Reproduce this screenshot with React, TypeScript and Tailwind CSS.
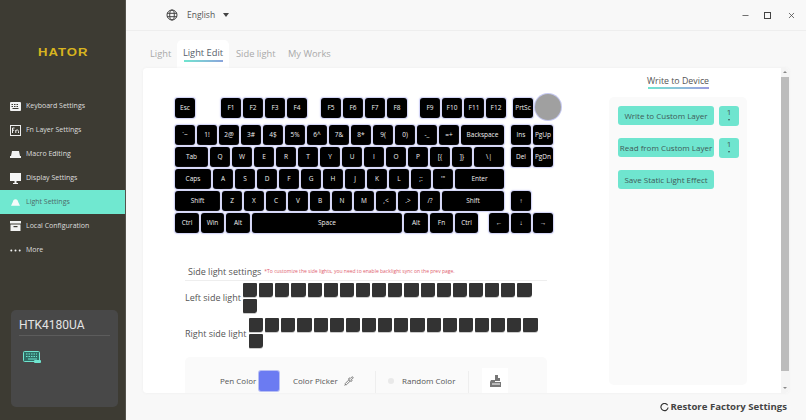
import React from "react";
import { Pipette, Minus, X } from "lucide-react";

type K = [string, number?];
const f = (s: string): K[] => s.split(" ").map((x) => [x]);
const rows: { keys: (K | number)[]; }[] = [
  { keys: [["`~"], ...f("1! 2@ 3# 4$ 5% 6^ 7& 8* 9( 0) -_ =+"), ["Backspace", 43], 3, ["Ins"], ["PgUp"]] },
  { keys: [["Tab", 33], ...f("Q W E R T Y U I O P [{ ]}"), ["\\|", 30], 3, ["Del"], ["PgDn"]] },
  { keys: [["Caps", 36], ...f("A S D F G H J K L ;: '\""), ["Enter", 49]] },
  { keys: [["Shift", 45], ...f("Z X C V B N M ,< .> /?"), ["Shift", 62], 3, ["↑"]] },
  { keys: [["Ctrl", 24], ["Win", 23], ["Alt", 24], ["Space", 150], ["Alt", 24], ["Fn", 23], ["Ctrl", 23], 7, ["←"], ["↓"], ["→"]] },
];

function Key({ label, w = 20 }: { label: string; w?: number }) {
  return (
    <div
      className="h-5 shrink-0 bg-black rounded-[3px] shadow-[0_0_0_1px_#d4d6f6,0_0_2px_1px_#e2e3fa] text-[#f0f0f0] flex items-center justify-center text-[6.5px] font-medium leading-none"
      style={{ width: w }}
    >
      {label}
    </div>
  );
}

function Row({ keys }: { keys: (K | number)[] }) {
  return (
    <div className="flex gap-[2px] h-5 items-center">
      {keys.map((k, i) =>
        typeof k === "number" ? (
          <div key={i} className="shrink-0" style={{ width: k }} />
        ) : (
          <Key key={i} label={k[0]} w={k[1]} />
        )
      )}
    </div>
  );
}

const navIcons: React.ReactNode[] = [
  <svg key="0" width="11" height="9" viewBox="0 0 11 9"><rect width="11" height="9" rx="1" fill="#f2f2f2" /><g fill="#3d3b34"><rect x="1.5" y="2" width="1.5" height="1" /><rect x="4" y="2" width="1.5" height="1" /><rect x="6.5" y="2" width="1.5" height="1" /><rect x="1.5" y="4" width="1.5" height="1" /><rect x="4" y="4" width="1.5" height="1" /><rect x="6.5" y="4" width="1.5" height="1" /><rect x="2.5" y="6" width="6" height="1" /></g></svg>,
  <svg key="1" width="11" height="11" viewBox="0 0 11 11"><rect x=".5" y=".5" width="10" height="10" fill="none" stroke="#eee" /><path d="M2.5 3h2M2.5 3v5M2.5 5.2h1.6M5.8 8V5M5.8 5.5c1.5-1 2.7-.6 2.7 1V8" fill="none" stroke="#eee" /></svg>,
  <svg key="2" width="11" height="7" viewBox="0 0 11 7"><path d="M2 0h7l1 5H1z" fill="#f2f2f2" /><rect y="5" width="11" height="2" fill="#f2f2f2" /></svg>,
  <svg key="3" width="11" height="11" viewBox="0 0 11 11"><rect width="11" height="8" fill="#f5f5f5" /><rect x="4.5" y="8" width="2" height="2" fill="#f5f5f5" /><rect x="3" y="10" width="5" height="1" fill="#f5f5f5" /></svg>,
  <svg key="4" width="9" height="7" viewBox="0 0 11 8"><path d="M5.5 0C3.5 0 2.5 1.5 2.200 3.500L0 8h11L8.800 3.500C8.500 1.500 7.500 0 5.500 0z" fill="#f5fbfa" /></svg>,
  <svg key="5" width="11" height="10" viewBox="0 0 11 10"><rect width="11" height="2.500" fill="#f2f2f2" /><rect x="0.500" y="3.500" width="10" height="6.500" fill="#f2f2f2" /><rect x="3.500" y="5" width="4" height="1.200" fill="#3d3b34" /></svg>,
  <svg key="6" width="11" height="3" viewBox="0 0 11 3"><circle cx="1.300" cy="1.500" r="1" fill="#f2f2f2" /><circle cx="5.500" cy="1.500" r="1" fill="#f2f2f2" /><circle cx="9.700" cy="1.500" r="1" fill="#f2f2f2" /></svg>,
];
const nav = ["Keyboard Settings", "Fn Layer Settings", "Macro Editing", "Display Settings", "Light Settings", "Local Configuration", "More"];

function Squares({ n }: { n: number }) {
  return (
    <>
      {Array.from({ length: n }).map((_, i) => (
        <div key={i} className="w-[14.15px] h-[14px] bg-[#333333] rounded-[1px] rounded-br-[3px] shadow-[0_1px_0_#cccccc]" />
      ))}
    </>
  );
}

function Btn({ children }: { children: React.ReactNode }) {
  return (
    <div className="w-[96px] h-[19px] bg-[#6fe5cf] rounded-[3px] flex items-center justify-center text-[8px] text-[#3f5a58] whitespace-nowrap">
      {children}
    </div>
  );
}
function Spin() {
  return (
    <div className="w-5 h-5 ml-[5px] bg-[#6fe5cf] rounded-[3px] flex flex-col items-center text-[#3f5a58] text-[8px] leading-none pt-[2px]">
      <span>1</span>
      <span className="mt-[3px] w-0 h-0 border-x-[1.500px] border-x-transparent border-t-[2px] border-t-[#3f5a58]" />
    </div>
  );
}

export default function App() {
  return (
    <div className="w-[806px] h-[420px] flex overflow-hidden bg-[#f8f8f8] font-['Open_Sans',sans-serif] antialiased">
      {/* sidebar */}
      <aside className="w-[126px] h-full shrink-0 bg-[#3d3b33] border-r border-[#55534c] flex flex-col">
        <div className="mt-[46px] ml-[38px] h-3 text-[#d8b41f] text-[10.500px] font-bold tracking-[0.800px] leading-3 font-['Liberation_Sans',sans-serif] scale-x-[1.25] origin-left">
          HATOR
        </div>
        <nav className="mt-[36px] flex flex-col">
          {nav.map((t, i) => (
            <div
              key={t}
              className={`h-6 pl-[10px] flex items-center text-[7px] ${i === 4 ? "bg-[#70e8d0] text-[#4d6a68]" : "text-[#dedede]"}`}
            >
              <span className="w-[11px] h-3 flex items-center justify-center shrink-0">{navIcons[i]}</span>
              <span className="ml-[5px]">{t}</span>
            </div>
          ))}
        </nav>
        <div className="mt-[48px] ml-[11px] w-[107px] h-[97px] bg-[#484848] rounded-[5px] px-2 pt-[7px]">
          <div className="text-[12px] leading-[16px] text-[#e4e4e4] font-['Roboto',sans-serif] border-b border-[#5c5c5c] pb-[2px] w-[91px]">HTK4180UA</div>
          <svg className="mt-[15px] ml-[4px]" width="18" height="12" viewBox="0 0 18 12">
            <rect x=".5" y=".5" width="16" height="10" rx="1" fill="#2f6f66" stroke="#6fe5cf" />
            <path d="M3 3h11M3 5.500h11" stroke="#6fe5cf" strokeDasharray="1.500 1" />
            <path d="M5 8h9" stroke="#6fe5cf" />
            <rect x="11" y="9" width="7" height="3" rx="1" fill="#6fe5cf" />
          </svg>
        </div>
      </aside>

      {/* main */}
      <main className="flex-1 flex flex-col min-w-0">
        <header className="h-[31px] shrink-0 border-b border-[#eeeeee] flex items-center pl-[40px] text-[#555]">
          <svg width="12" height="12" viewBox="0 0 12 12" fill="none" stroke="#444" strokeWidth="1">
            <circle cx="6" cy="6" r="5" />
            <ellipse cx="6" cy="6" rx="2.300" ry="5" />
            <path d="M1 4.300h10M1 7.700h10" />
          </svg>
          <span className="ml-[9px] text-[8.500px] w-[36px]">English</span>
          <span className="w-0 h-0 border-x-[3.500px] border-x-transparent border-t-[4px] border-t-[#444]" />
          <div className="ml-auto flex items-center gap-[14px] pr-[10px]">
            <Minus size={9} strokeWidth={2} color="#444" />
            <span className="w-[7px] h-[7px] border-[1.500px] border-[#444]" />
            <X size={9} strokeWidth={2} color="#444" className="ml-[2px]" />
          </div>
        </header>

        <div className="h-[37px] shrink-0 flex items-end pl-[24px] text-[9.300px] text-[#a9a9a9]">
          <div className="h-7 flex items-center w-[27px]">Light</div>
          <div className="h-7 w-[52px] bg-white rounded-t-[5px] flex flex-col items-center justify-center text-[#55606a] pt-[1px]">
            <span className="leading-[12px]">Light Edit</span>
            <span className="w-[39px] h-[2px] mt-[1px] bg-gradient-to-r from-[#6fe5cf] to-[#8aa4dc]" />
          </div>
          <div className="h-7 flex items-center ml-[7px] w-[52px]">Side light</div>
          <div className="h-7 flex items-center">My Works</div>
        </div>

        <section className="mx-[17px] h-[325px] bg-white rounded-[4px] flex overflow-hidden shadow-[0_0_3px_#eeeeee]">
          {/* left */}
          <div className="w-[466px] shrink-0 pl-[32px] pt-[30px]">
            <div className="flex flex-col gap-[2px]">
              <div className="flex gap-[2px] h-5 items-center mb-[5px]">
                <Key label="Esc" />
                <div className="w-[22px] shrink-0" />
                {["F1", "F2", "F3", "F4"].map((k) => <Key key={k} label={k} />)}
                <div className="w-[10px] shrink-0" />
                {["F5", "F6", "F7", "F8"].map((k) => <Key key={k} label={k} />)}
                <div className="w-[9px] shrink-0" />
                {["F9", "F10", "F11", "F12"].map((k) => <Key key={k} label={k} />)}
                <div className="w-[3px] shrink-0" />
                <Key label="PrtSc" />
                <div className="w-[26px] h-[26px] shrink-0 -mt-[3px] rounded-full bg-[#a0a0a0] shadow-[0_0_0_1px_#c5c8f0]" />
              </div>
              {rows.map((r, i) => <Row key={i} keys={r.keys} />)}
            </div>

            <div className="ml-[10px] mt-[30px] w-[362px] h-[18px] border-b border-[#eeeeee] pl-[3px] flex items-center whitespace-nowrap">
              <span className="text-[9px] text-[#555]">Side light settings</span>
              <span className="ml-[3px] text-[5px] text-[#e0606e]">*To customize the side lights, you need to enable backlight sync on the prev page.</span>
            </div>
            <div className="ml-[10px] mt-[1px] flex text-[9px] text-[#555]">
              <div className="w-[58px] shrink-0 pt-[9px] whitespace-nowrap">Left side light</div>
              <div className="w-[300px] flex flex-wrap gap-[2px] pt-[1px] content-start h-[36px]"><Squares n={19} /></div>
            </div>
            <div className="ml-[10px] flex text-[9px] text-[#555]">
              <div className="w-[64px] shrink-0 pt-[9px] whitespace-nowrap">Right side light</div>
              <div className="w-[300px] flex flex-wrap gap-[2px] content-start h-[36px]"><Squares n={19} /></div>
            </div>

            <div className="ml-[10px] mt-[3px] w-[362px] h-[100px] bg-[#fafafa] rounded-[5px] relative flex text-[8px] text-[#555] items-start pt-[14px]">
              <span className="ml-[35px] w-[39px] leading-[20px]">Pen Color</span>
              <span className="w-[20px] h-[20px] bg-[#6b7bf2] rounded-[2px] shadow-[0_0_0_1px_#b9c0f4] shrink-0" />
              <span className="ml-[14px] w-[51px] leading-[20px]">Color Picker</span>
              <Pipette size={10} color="#666" className="mt-[5px]" />
              <span className="ml-[21px] w-px h-[24px] bg-[#eeeeee]" />
              <span className="ml-[12px] w-[6px] h-[6px] mt-[7px] rounded-full bg-[#e9e9e9]" />
              <span className="ml-[8px] w-[66px] leading-[20px]">Random Color</span>
              <span className="w-px h-[24px] bg-[#eeeeee]" />
              <span className="ml-[13px] w-[26px] h-[26px] -mt-[3px] bg-white flex items-center justify-center">
                <svg width="13" height="13" viewBox="0 0 13 13"><path d="M6 0h3v3h2v3H6zM2 5h4v2h6v5H1V7z" fill="#777" /><path d="M3 9h8" stroke="#fff" /></svg>
              </span>
            </div>
          </div>

          {/* right */}
          <div className="w-[138px] shrink-0 flex flex-col">
            <div className="h-[29px] flex flex-col items-center pt-[7px]">
              <span className="text-[8.800px] leading-[12px] text-[#555] font-medium">Write to Device</span>
              <span className="w-[61px] h-[2px] bg-gradient-to-r from-[#6fe5cf] to-[#9a9be0]" />
            </div>
            <div className="w-[138px] h-[288px] bg-[#fafafa] rounded-[5px] pl-[9px] pt-[9px] flex flex-col gap-[12px]">
              <div className="flex"><Btn>Write to Custom Layer</Btn><Spin /></div>
              <div className="flex"><Btn>Read from Custom Layer</Btn><Spin /></div>
              <div className="flex"><Btn>Save Static Light Effect</Btn></div>
            </div>
          </div>

          {/* scrollbar */}
          <div className="ml-auto w-[8px] shrink-0 flex flex-col items-center bg-[#f4f4f4] pt-[3px]">
            <span className="w-0 h-0 border-x-[2px] border-x-transparent border-b-[2px] border-b-[#888]" />
            <div className="mt-[4px] w-full h-[294px] bg-[#bcbcbc]" />
            <span className="mt-auto mb-[4px] w-0 h-0 border-x-[2px] border-x-transparent border-t-[2px] border-t-[#888]" />
          </div>
        </section>

        <footer className="flex-1 flex items-center justify-end pr-[19px] pt-[2px] text-[9.600px] font-bold text-[#444] gap-[2px]">
          <svg width="9" height="9" viewBox="0 0 10 10" fill="none" stroke="#333" strokeWidth="1.300"><path d="M8.500 2.500A4 4 0 1 0 9 5" /></svg>
          <span>Restore Factory Settings</span>
        </footer>
      </main>
    </div>
  );
}
